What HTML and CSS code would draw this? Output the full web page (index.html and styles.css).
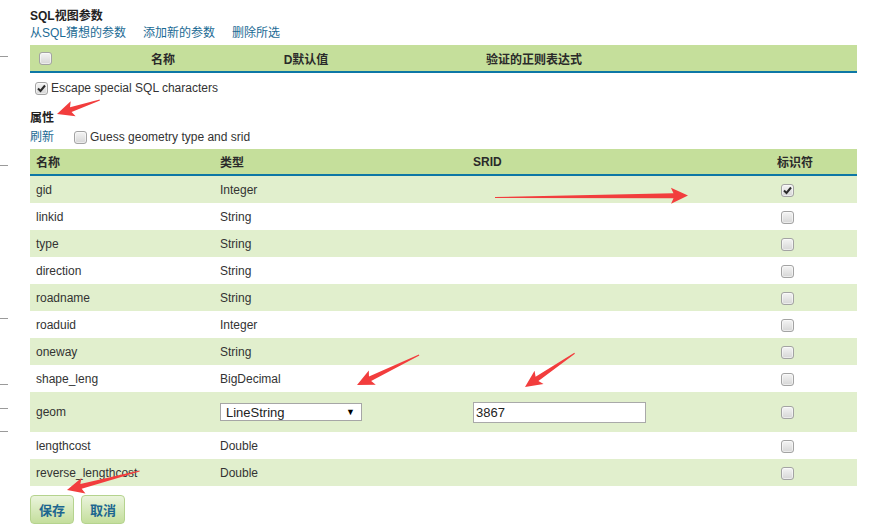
FILE: index.html
```html
<!DOCTYPE html>
<html lang="zh-CN">
<head>
    <meta charset="UTF-8">
    <title>SQL视图参数</title>
    <link rel="stylesheet" href="styles.css">
</head>
<body>
<div class="page">
    <h3 class="title">SQL视图参数</h3>
    <div class="links">
        <a href="#">从SQL猜想的参数</a>
        <a href="#">添加新的参数</a>
        <a href="#">删除所选</a>
    </div>

    <table class="grid params">
        <colgroup>
            <col class="p-sel">
            <col class="p-name">
            <col class="p-def">
            <col class="p-regex">
            <col>
        </colgroup>
        <thead>
        <tr>
            <th><span class="cb"></span></th>
            <th>名称</th>
            <th>D默认值</th>
            <th>验证的正则表达式</th>
            <th></th>
        </tr>
        </thead>
    </table>

    <label class="opt escape">
        <span class="cb on"><svg viewBox="0 0 11 11"><path d="M2 5.5 L4.5 8 L9 2.5"/></svg></span>
        Escape special SQL characters
    </label>

    <h3 class="title attr-title">属性</h3>
    <div class="refresh">
        <a href="#">刷新</a>
        <label class="opt"><span class="cb"></span>Guess geometry type and srid</label>
    </div>

    <table class="grid attrs">
        <colgroup>
            <col class="a-name">
            <col class="a-type">
            <col class="a-srid">
            <col class="a-id">
        </colgroup>
        <thead>
        <tr>
            <th>名称</th>
            <th>类型</th>
            <th>SRID</th>
            <th>标识符</th>
        </tr>
        </thead>
        <tbody>
        <tr><td>gid</td><td>Integer</td><td></td><td><span class="cb on"><svg viewBox="0 0 11 11"><path d="M2 5.5 L4.5 8 L9 2.5"/></svg></span></td></tr>
        <tr><td>linkid</td><td>String</td><td></td><td><span class="cb"></span></td></tr>
        <tr><td>type</td><td>String</td><td></td><td><span class="cb"></span></td></tr>
        <tr><td>direction</td><td>String</td><td></td><td><span class="cb"></span></td></tr>
        <tr><td>roadname</td><td>String</td><td></td><td><span class="cb"></span></td></tr>
        <tr><td>roaduid</td><td>Integer</td><td></td><td><span class="cb"></span></td></tr>
        <tr><td>oneway</td><td>String</td><td></td><td><span class="cb"></span></td></tr>
        <tr><td>shape_leng</td><td>BigDecimal</td><td></td><td><span class="cb"></span></td></tr>
        <tr class="tall">
            <td>geom</td>
            <td>
                <span class="select">
                    <span>LineString</span>
                    <span class="caret">▼</span>
                </span>
            </td>
            <td><input class="srid" type="text" value="3867"></td>
            <td><span class="cb"></span></td>
        </tr>
        <tr><td>lengthcost</td><td>Double</td><td></td><td><span class="cb"></span></td></tr>
        <tr><td>reverse_lengthcost</td><td>Double</td><td></td><td><span class="cb"></span></td></tr>
        </tbody>
    </table>

    <div class="buttons">
        <button class="btn">保存</button>
        <button class="btn">取消</button>
    </div>
</div>

<!-- screenshot annotations: red arrows + gutter ticks -->
<svg class="marks" width="871" height="524" viewBox="0 0 871 524">
    <g class="ticks">
        <line x1="0" y1="56.5" x2="8" y2="56.5"/>
        <line x1="0" y1="165.5" x2="8" y2="165.5"/>
        <line x1="0" y1="318.5" x2="8" y2="318.5"/>
        <line x1="0" y1="384.5" x2="8" y2="384.5"/>
        <line x1="0" y1="408.5" x2="8" y2="408.5"/>
        <line x1="0" y1="431.5" x2="8" y2="431.5"/>
    </g>
    <g class="arrows">
        <polygon transform="translate(57,114) rotate(162)" points="0,0 -17,-8 -14.5,-2.5 -45,-0.5 -45,0.5 -14.5,2.5 -17,8"/>
        <polygon transform="translate(688,195.5) rotate(-0.6)" points="0,0 -17,-8 -14.5,-2.5 -193,-0.5 -193,0.5 -14.5,2.5 -17,8"/>
        <polygon transform="translate(357,385) rotate(154.2)" points="0,0 -17,-8 -14.5,-2.5 -69,-0.5 -69,0.5 -14.5,2.5 -17,8"/>
        <polygon transform="translate(525,387) rotate(145.8)" points="0,0 -17,-8 -14.5,-2.5 -60,-0.5 -60,0.5 -14.5,2.5 -17,8"/>
        <polygon transform="translate(67,490) rotate(165.4)" points="0,0 -17,-8 -14.5,-2.5 -75,-0.5 -75,0.5 -14.5,2.5 -17,8"/>
    </g>
</svg>
</body>
</html>
```

FILE: styles.css
```css
* {
    box-sizing: border-box;
}
body {
    margin: 0;
    position: relative;
    width: 871px;
    height: 524px;
    overflow: hidden;
    background: #fff;
    color: #333;
    font: 12px "Liberation Sans", "Noto Sans CJK SC", sans-serif;
}

.page {
    padding: 8px 0 0 30px;
}

.title {
    margin: 0;
    font-size: 12px;
    line-height: 16px;
    font-weight: bold;
    color: #222;
}

a {
    color: #1a6a94;
    text-decoration: none;
}

.links {
    display: flex;
    gap: 17px;
    line-height: 18px;
}

/* tables */
.grid {
    width: 827px;
    table-layout: fixed;
    border-collapse: separate;
    border-spacing: 0;
}
.grid th {
    height: 28px;
    padding: 0 6px;
    background: #c5df9b;
    border-bottom: 2px solid #0d77a5;
    font-weight: bold;
    color: #2a2a2a;
    text-align: left;
    white-space: nowrap;
}
.grid td {
    height: 27px;
    padding: 0 6px;
    white-space: nowrap;
}
.grid tbody tr:nth-child(odd) td {
    background: #e1efcd;
}
.grid tr.tall td {
    height: 40px;
}

.params {
    margin-top: 3px;
}
.params th {
    text-align: center;
}
.params .p-sel { width: 30px; }
.params .p-name { width: 206px; }
.params .p-def { width: 80px; }
.params .p-regex { width: 376px; }
.params th:first-child {
    padding: 0;
}

.attrs {
    margin-top: 3px;
}
.attrs th {
    height: 27px;
}
.attrs .a-name { width: 184px; }
.attrs .a-type { width: 253px; }
.attrs .a-srid { width: 304px; }
.attrs .a-id { width: 86px; }
.attrs td:last-child .cb {
    margin-left: 4px;
}

/* fake checkboxes */
.cb {
    display: inline-block;
    vertical-align: middle;
    width: 13px;
    height: 13px;
    border: 1px solid #a3a3a3;
    border-radius: 3px;
    background: linear-gradient(#f4f4f4, #d6d6d6);
    box-shadow: inset 0 0 0 1px rgba(255, 255, 255, .5);
}
.cb svg {
    display: block;
    width: 11px;
    height: 11px;
}
.cb svg path {
    fill: none;
    stroke: #2b2b2b;
    stroke-width: 2;
}

.opt {
    display: flex;
    align-items: center;
    line-height: 18px;
}
.escape {
    margin-top: 6px;
}
.escape .cb {
    margin: 0 3px 0 5px;
}

.attr-title {
    margin-top: 13px;
}

.refresh {
    display: flex;
    align-items: center;
    line-height: 18px;
    margin-top: 2px;
}
.refresh .cb {
    margin: 0 3px 0 20px;
}

/* geom row controls */
.select {
    display: flex;
    align-items: center;
    justify-content: space-between;
    width: 142px;
    height: 18px;
    padding: 0 6px 0 5px;
    border: 1px solid #a6a6a6;
    background: #fff;
    color: #222;
    font-size: 13px;
}
.caret {
    font-size: 9px;
    color: #000;
}
.srid {
    width: 173px;
    height: 21px;
    padding: 0 2px;
    border: 1px solid #a9a9a9;
    font: 13px "Liberation Sans", sans-serif;
    color: #222;
}

.buttons {
    display: flex;
    gap: 7px;
    margin-top: 9px;
}
.btn {
    height: 29px;
    padding: 0 8px;
    border: 1px solid #b5d38e;
    border-radius: 4px;
    background: linear-gradient(#eaf4dc, #c4de9c);
    color: #1d6690;
    font: bold 13px "Liberation Sans", "Noto Sans CJK SC", sans-serif;
}

/* annotation overlay */
.marks {
    position: absolute;
    left: 0;
    top: 0;
    pointer-events: none;
}
.ticks line {
    stroke: #9a9a9a;
    stroke-width: 1;
}
.arrows polygon {
    fill: #f23d3d;
}
```
